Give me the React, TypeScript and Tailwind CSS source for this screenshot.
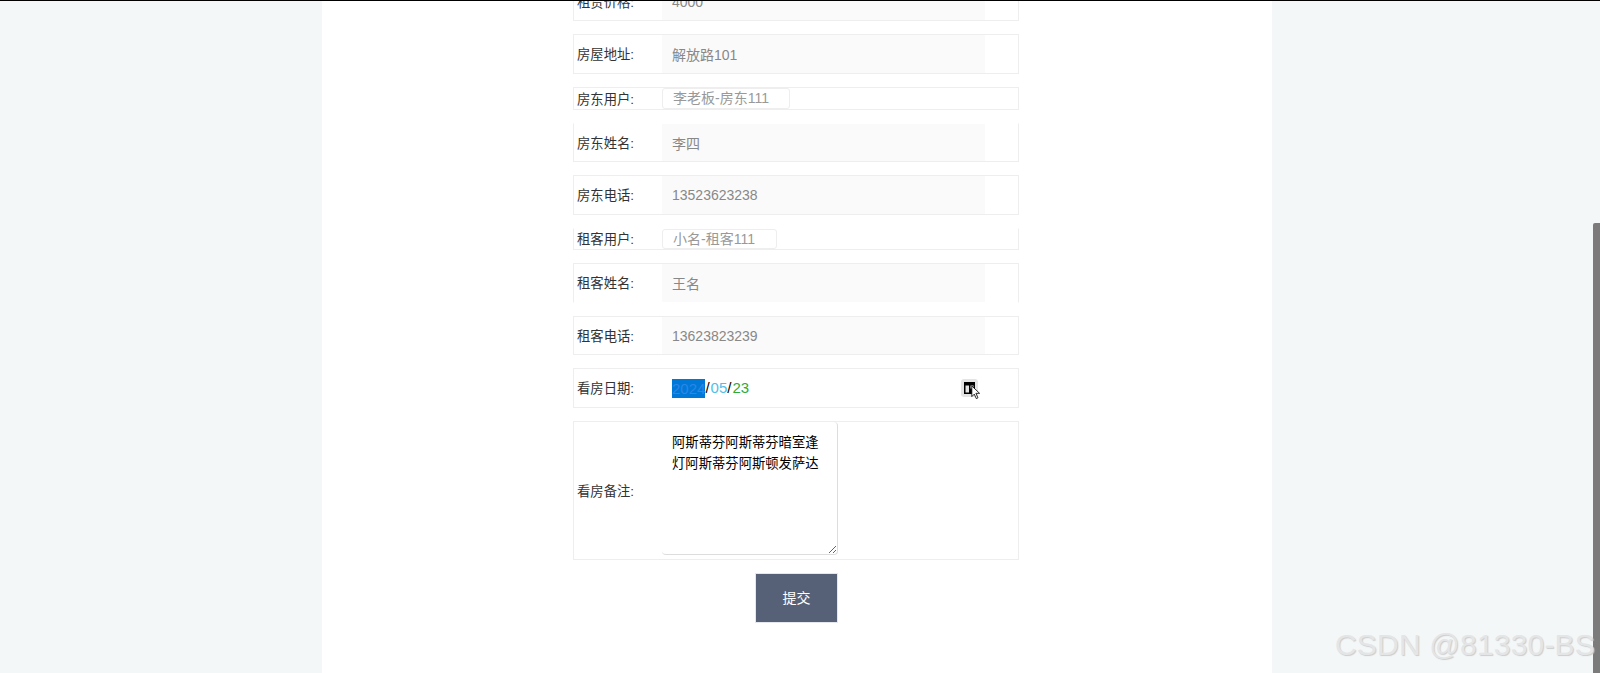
import React from "react";

const font = { fontFamily: '"Liberation Sans", "Noto Sans CJK SC", sans-serif' };

function Row({
  label,
  className = "",
  children,
}: {
  label: string;
  className?: string;
  children: React.ReactNode;
}) {
  return (
    <div className={`flex items-stretch border border-[#eeeeee] bg-white w-[446px] ${className}`}>
      <label className="w-[88px] shrink-0 pl-[3px] pt-[2px] flex items-center text-[13.333px] text-[#333333]">{label}:</label>
      {children}
    </div>
  );
}

function Field({ value }: { value: string }) {
  return (
    <input
      readOnly
      value={value}
      className="w-[323px] h-full bg-[#fafafa] pl-[10px] text-[14px] text-[#888888] outline-none"
    />
  );
}

function Pick({ value, width }: { value: string; width: string }) {
  return (
    <div className={`${width} flex items-center pl-[10px] border border-[#eeeeee] rounded-[3px] text-[14px] text-[#999999] bg-white`}>
      {value}
    </div>
  );
}

export default function App() {
  return (
    <div className="relative h-[673px] overflow-hidden bg-[#f4f7f8]" style={font}>
      <div className="absolute left-0 top-0 z-10 w-full h-px bg-black" />
      <main className="ml-[322px] w-[950px] h-full bg-white overflow-hidden pl-[251px]">
        <form className="-mt-[18px] flex flex-col gap-[13px]">
          <Row label="租赁价格" className="h-[39px]"><Field value="4000" /></Row>
          <Row label="房屋地址" className="h-[40px]"><Field value="解放路101" /></Row>
          <Row label="房东用户" className="h-[23px]"><Pick value="李老板-房东111" width="w-[128px]" /></Row>
          <Row label="房东姓名" className="h-[39px] border-t-white"><Field value="李四" /></Row>
          <Row label="房东电话" className="h-[40px]"><Field value="13523623238" /></Row>
          <Row label="租客用户" className="h-[22px] border-t-white"><Pick value="小名-租客111" width="w-[115px]" /></Row>
          <Row label="租客姓名" className="h-[40px] border-b-white"><Field value="王名" /></Row>
          <Row label="租客电话" className="h-[39px]"><Field value="13623823239" /></Row>
          <Row label="看房日期" className="h-[40px]">
            <div className="w-[356px] flex items-center pl-[10px] text-[15px] text-black">
              <span className="bg-[#0078d7] text-[#2b86e6] leading-[19px]">2024</span>
              <span>/</span>
              <span className="text-[#4fc0ea] ml-px">05</span>
              <span>/</span>
              <span className="text-[#2eaa3c] ml-px">23</span>
              <span className="ml-auto mr-[40px] relative w-[17px] h-[18px] rounded-[3px] bg-[#e4e4e4] flex items-center justify-center">
                <svg width="11" height="12" viewBox="0 0 11 12" className="-ml-[1px]">
                  <path d="M0 0h11v12H0z" fill="#000" />
                  <path d="M1.500 3.500h3.500v7H1.500zM6.500 3.500h3v3h-3z" fill="#e4e4e4" />
                </svg>
                <svg width="9" height="17" viewBox="0 0 11 18" className="absolute left-[10px] top-[5px]">
                  <path d="M1 1v13l3-3 2.500 5.500 2-1L6 10h4.500z" fill="#fff" stroke="#000" strokeWidth="1" />
                </svg>
              </span>
            </div>
          </Row>
          <Row label="看房备注" className="h-[139px]">
            <textarea
              readOnly
              defaultValue="阿斯蒂芬阿斯蒂芬暗室逢灯阿斯蒂芬阿斯顿发萨达"
              className="w-[176px] h-[133px] self-start bg-white border-r border-b border-[#dddddd] rounded-[4px] pl-[10px] pr-[11px] pt-[10px] text-[13.333px] leading-[21px] text-black outline-none resize"
            />
          </Row>
          <button
            type="button"
            className="ml-[182px] w-[83px] h-[50px] bg-[#566177] border border-[#e4e7ec] text-white text-[14px]"
          >
            提交
          </button>
        </form>
      </main>
      <div className="absolute right-0 top-[223px] w-[7px] h-[450px] bg-[#7b7b7b] rounded-tl-[2px]" />
      <div className="absolute left-[1335px] top-[628px] text-[30px] leading-[34px] tracking-[0.2px] whitespace-nowrap text-[#e4e5e6] [text-shadow:1px_1px_1px_#cccccc]">
        CSDN @81330-BS
      </div>
    </div>
  );
}
